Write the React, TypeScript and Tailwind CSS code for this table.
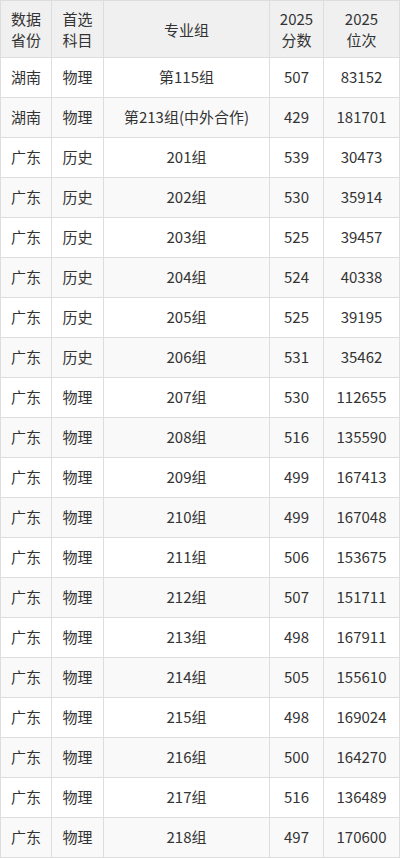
const rows: [string, string, string, string, string][] = [
  ["湖南", "物理", "第115组", "507", "83152"],
  ["湖南", "物理", "第213组(中外合作)", "429", "181701"],
  ["广东", "历史", "201组", "539", "30473"],
  ["广东", "历史", "202组", "530", "35914"],
  ["广东", "历史", "203组", "525", "39457"],
  ["广东", "历史", "204组", "524", "40338"],
  ["广东", "历史", "205组", "525", "39195"],
  ["广东", "历史", "206组", "531", "35462"],
  ["广东", "物理", "207组", "530", "112655"],
  ["广东", "物理", "208组", "516", "135590"],
  ["广东", "物理", "209组", "499", "167413"],
  ["广东", "物理", "210组", "499", "167048"],
  ["广东", "物理", "211组", "506", "153675"],
  ["广东", "物理", "212组", "507", "151711"],
  ["广东", "物理", "213组", "498", "167911"],
  ["广东", "物理", "214组", "505", "155610"],
  ["广东", "物理", "215组", "498", "169024"],
  ["广东", "物理", "216组", "500", "164270"],
  ["广东", "物理", "217组", "516", "136489"],
  ["广东", "物理", "218组", "497", "170600"],
];

const headers = [
  ["数据", "省份"],
  ["首选", "科目"],
  ["专业组"],
  ["2025", "分数"],
  ["2025", "位次"],
];

export default function App() {
  return (
    <div className="w-[400px] bg-white font-['Noto_Sans_CJK_SC','Noto_Sans',sans-serif] text-[15px] text-[#333]">
      <div className="grid grid-cols-[50px_51px_165px_53px_75px] grid-rows-[56px] auto-rows-[39px] gap-px border border-[#dddddd] bg-[#dddddd]">
        {headers.map((lines, i) => (
          <div
            key={i}
            className="flex flex-col items-center justify-center bg-[#f0f0f0] leading-[21px]"
          >
            {lines.map((l) => (
              <span key={l}>{l}</span>
            ))}
          </div>
        ))}
        {rows.map((row, r) =>
          row.map((cell, c) => (
            <div
              key={`${r}-${c}`}
              className={`flex items-center justify-center whitespace-nowrap ${
                r % 2 === 1 ? "bg-[#f9f9f9]" : "bg-white"
              }`}
            >
              {cell}
            </div>
          )),
        )}
      </div>
    </div>
  );
}
